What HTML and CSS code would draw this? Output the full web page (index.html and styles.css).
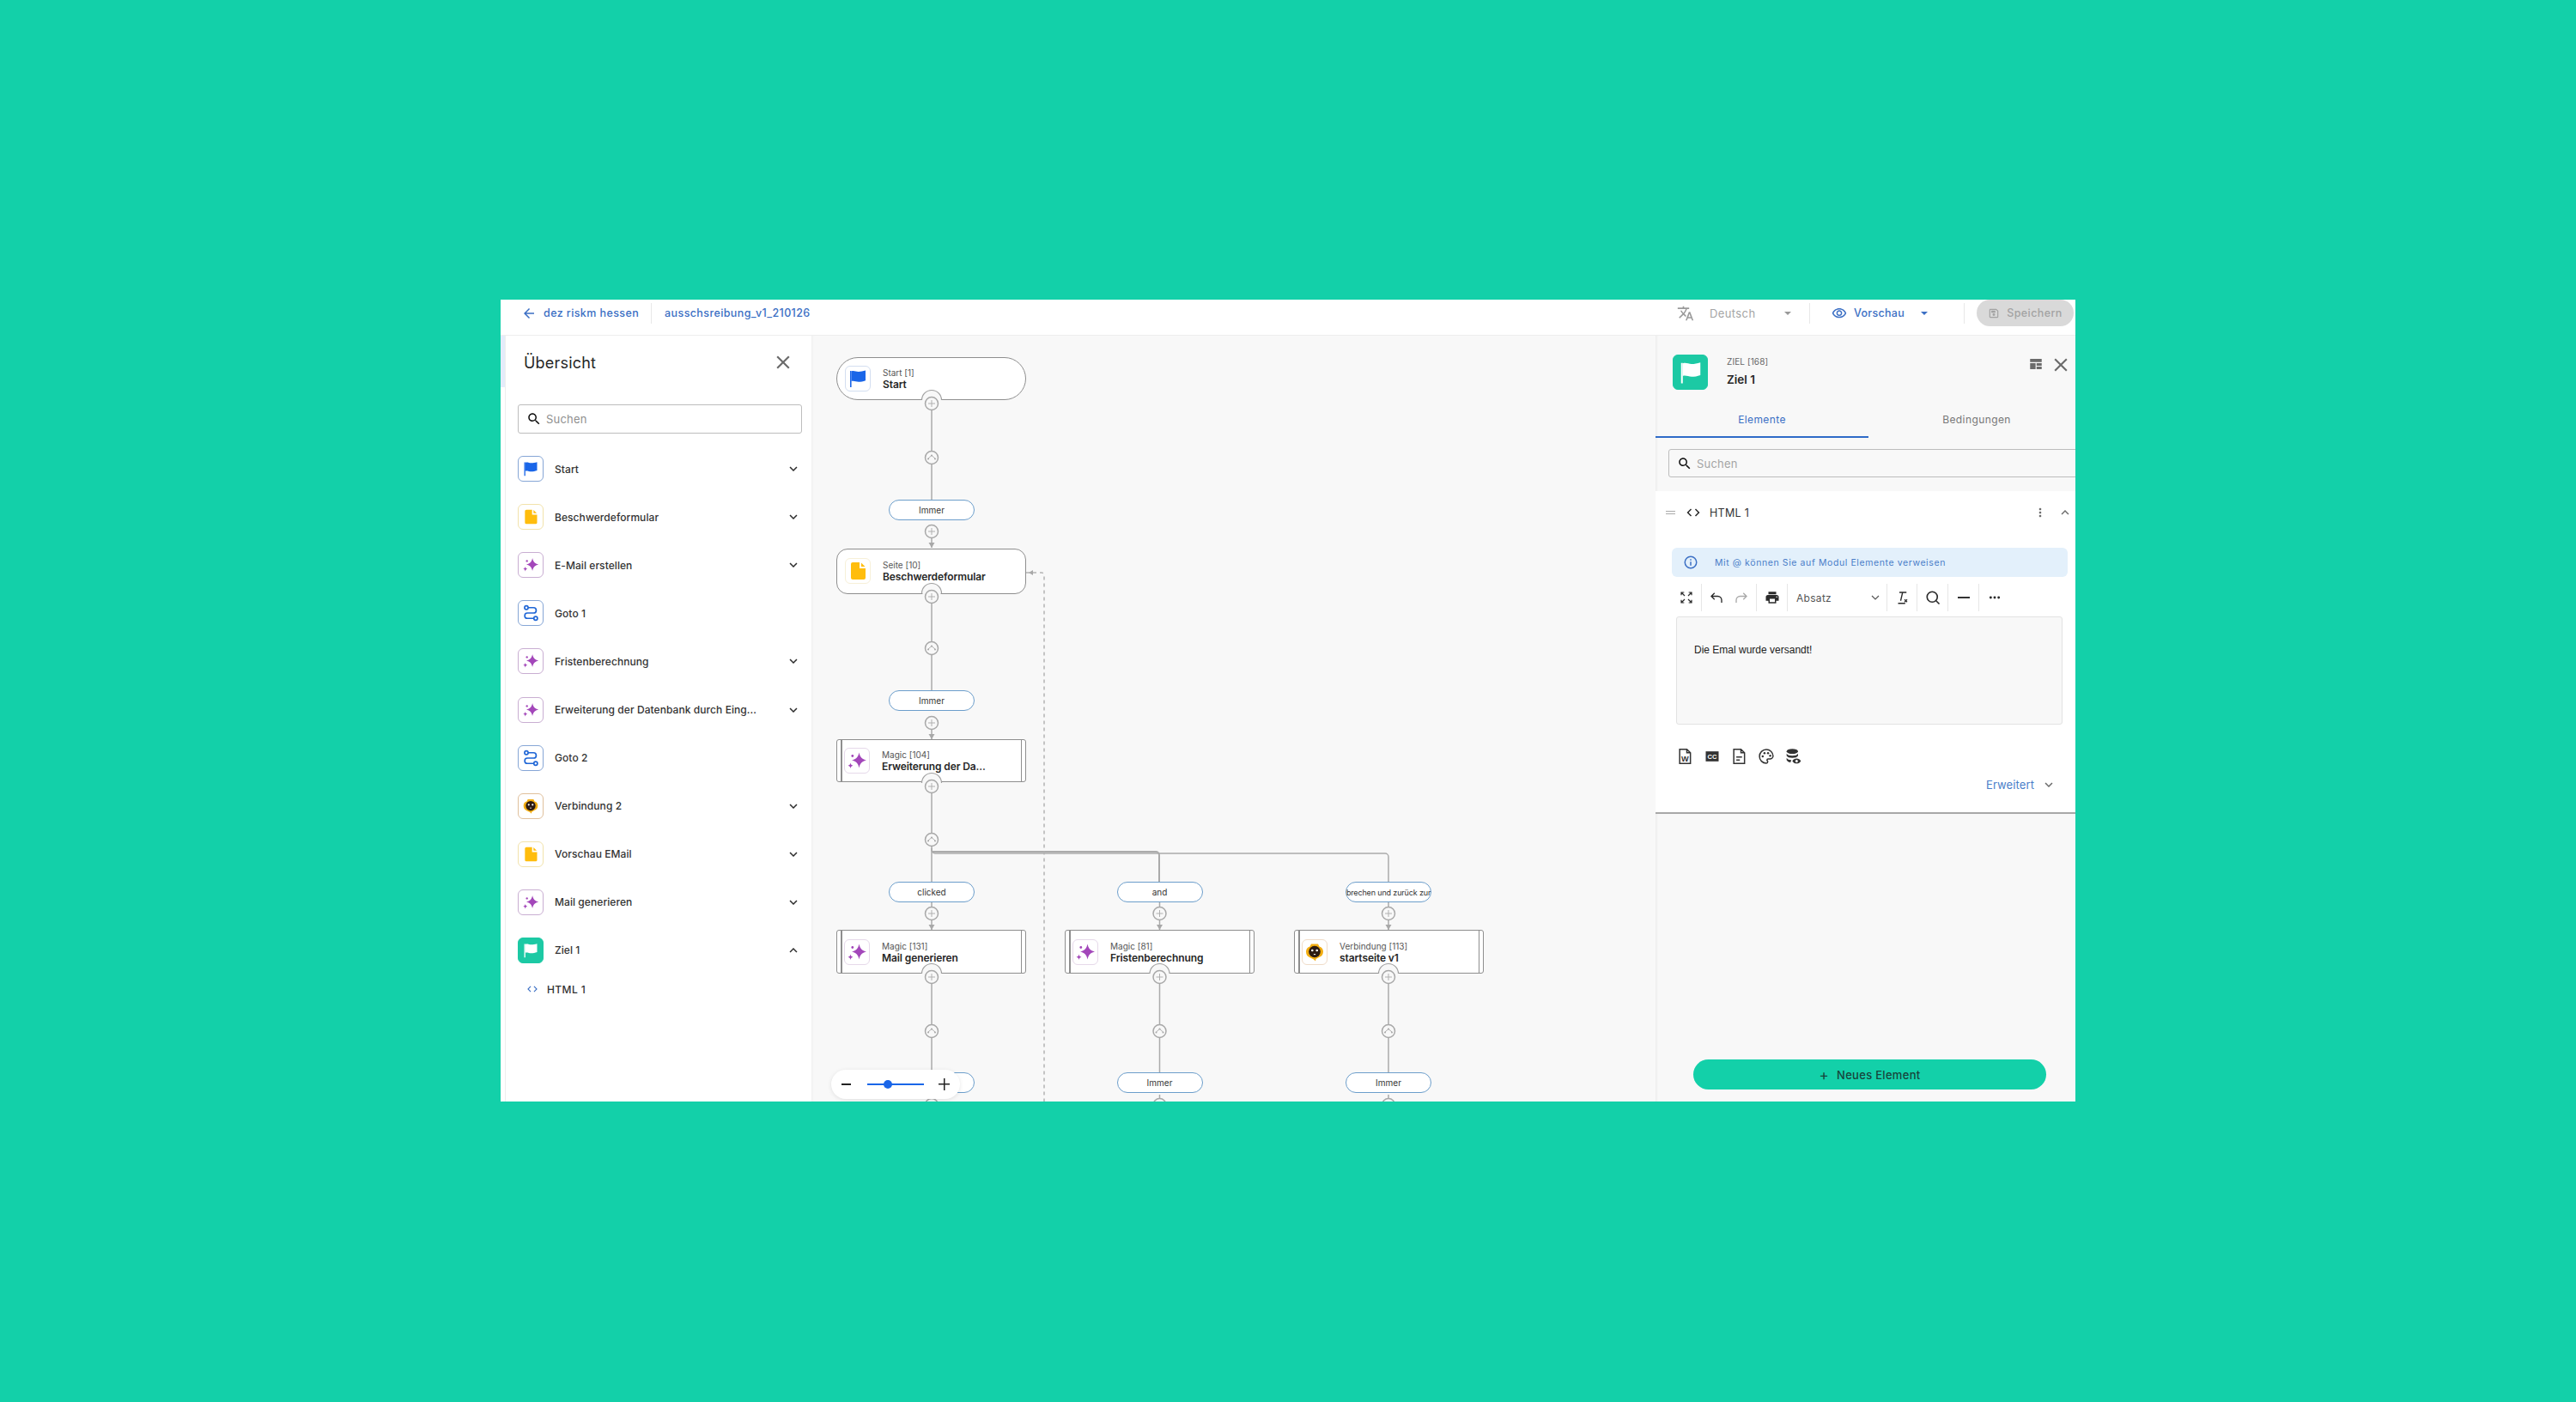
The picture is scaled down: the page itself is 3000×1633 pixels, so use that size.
FILE: index.html
```html
<!DOCTYPE html>
<html lang="de">
<head>
  <meta charset="utf-8">
  <title>ausschsreibung_v1_210126</title>
  <link rel="stylesheet" href="styles.css">
</head>
<body>
<svg class="defs" width="0" height="0">
  <symbol id="i-flag" viewBox="0 0 24 24"><path d="M3 3h1.6v19H3z"/><path d="M4.6 3.4c3-1 5.2.6 8.2.6 2.9 0 5-.5 8.2-1.4v11.7c-3 1-5.3 1.5-8.2 1.5-3 0-5.2-1.5-8.2-.7z"/></symbol>
  <symbol id="i-file" viewBox="0 0 24 24"><path d="M6 2h8v7h7v11a2 2 0 0 1-2 2H6a2 2 0 0 1-2-2V4a2 2 0 0 1 2-2z"/><path d="M16 2.5l4.5 4.5H16z"/></symbol>
  <symbol id="i-magic" viewBox="0 0 24 24"><path d="M14.5 2.5c1 5.2 3.3 7.8 8.5 9-5.2 1.2-7.5 3.8-8.5 9-1-5.2-3.3-7.8-8.5-9 5.2-1.2 7.5-3.8 8.5-9z"/><path d="M4.5 14.5c.4 2 1.1 2.8 3 3.2-1.9.4-2.6 1.2-3 3.3-.4-2.1-1.1-2.9-3-3.3 1.9-.4 2.6-1.2 3-3.2z"/><circle cx="6.8" cy="6.5" r="1.4"/></symbol>
  <symbol id="i-goto" viewBox="0 0 24 24"><g fill="none" stroke="currentColor" stroke-width="2"><circle cx="6" cy="4.5" r="2.5"/><circle cx="19" cy="19.5" r="2.5"/><path d="M8.5 4.5H16a3.7 3.7 0 0 1 0 7.5H7.5a3.7 3.7 0 0 0 0 7.5h9"/></g></symbol>
  <symbol id="i-bot" viewBox="0 0 24 24"><path fill="#f2ad12" d="M8 2.5h8l1.5 3c2.5.5 4.5 2.5 4.5 6s-2 5.5-4.5 6.2L13.5 20l-.5 2.5-2-2-4.5-2.3C4 17.5 2 15 2 11.5s2-5.5 4.5-6z"/><circle cx="12" cy="11.5" r="6.8" fill="#2b1a12"/><circle cx="9.3" cy="10" r="1.3" fill="#fff"/><circle cx="14.7" cy="10" r="1.3" fill="#fff"/><path fill="#fff" d="M10.5 14h3l-1.5 1.5z"/></symbol>
  <symbol id="i-search" viewBox="0 0 24 24"><path d="M15.5 14h-.79l-.28-.27C15.41 12.59 16 11.11 16 9.5 16 5.91 13.09 3 9.5 3S3 5.91 3 9.5 5.91 16 9.5 16c1.61 0 3.09-.59 4.23-1.57l.27.28v.79l5 4.99L20.49 19l-4.99-5zm-6 0C7.01 14 5 11.99 5 9.5S7.01 5 9.5 5 14 7.01 14 9.5 11.99 14 9.5 14z"/></symbol>
  <symbol id="i-close" viewBox="0 0 24 24"><path d="M19 6.41L17.59 5 12 10.59 6.41 5 5 6.41 10.59 12 5 17.59 6.41 19 12 13.41 17.59 19 19 17.59 13.41 12z"/></symbol>
  <symbol id="i-down" viewBox="0 0 24 24"><path d="M16.59 8.59L12 13.17 7.41 8.59 6 10l6 6 6-6z"/></symbol>
  <symbol id="i-up" viewBox="0 0 24 24"><path d="M12 8l-6 6 1.41 1.41L12 10.83l4.59 4.58L18 14z"/></symbol>
  <symbol id="i-code" viewBox="0 0 24 24"><path d="M9.4 16.6L4.8 12l4.6-4.6L8 6l-6 6 6 6 1.4-1.4zm5.2 0l4.6-4.6-4.6-4.6L16 6l6 6-6 6-1.4-1.4z"/></symbol>
</svg>

<div class="app">
  <header class="topbar">
    <svg class="ic18 blue" viewBox="0 0 24 24"><path d="M20 11H7.83l5.59-5.59L12 4l-8 8 8 8 1.41-1.41L7.83 13H20v-2z"/></svg>
    <a class="crumb">dez riskm hessen</a>
    <span class="vsep"></span>
    <a class="crumb">ausschsreibung_v1_210126</a>
    <div class="topbar-right">
      <svg class="ic20 grey" viewBox="0 0 24 24"><path d="M12.87 15.07l-2.54-2.51.03-.03c1.74-1.94 2.98-4.17 3.71-6.53H17V4h-7V2H8v2H1v1.99h11.17C11.5 7.92 10.44 9.75 9 11.35 8.07 10.32 7.3 9.19 6.69 8h-2c.73 1.63 1.73 3.17 2.98 4.56l-5.09 5.02L4 19l5-5 3.11 3.11.76-2.04zM18.5 10h-2L12 22h2l1.12-3h4.75L21 22h2l-4.5-12zm-2.62 7l1.62-4.33L19.12 17h-3.24z"/></svg>
      <span class="lang">Deutsch</span>
      <span class="caret caret-grey"></span>
      <span class="vsep vsep-lang"></span>
      <svg class="ic18 blue" viewBox="0 0 24 24"><path d="M12 6c3.79 0 7.17 2.13 8.82 5.5C19.17 14.87 15.79 17 12 17s-7.17-2.13-8.82-5.5C4.83 8.13 8.21 6 12 6m0-2C7 4 2.73 7.11 1 11.5 2.73 15.89 7 19 12 19s9.27-3.11 11-7.5C21.27 7.11 17 4 12 4zm0 5c1.38 0 2.5 1.12 2.5 2.5S13.38 14 12 14s-2.5-1.12-2.5-2.5S10.62 9 12 9m0-2c-2.48 0-4.5 2.02-4.5 4.5S9.52 16 12 16s4.5-2.02 4.5-4.5S14.48 7 12 7z"/></svg>
      <span class="preview">Vorschau</span>
      <span class="caret caret-blue"></span>
      <span class="vsep vsep-preview"></span>
      <button class="save">
        <svg class="ic14" viewBox="0 0 24 24"><path d="M17 3H5c-1.11 0-2 .9-2 2v14c0 1.1.89 2 2 2h14c1.1 0 2-.9 2-2V7l-4-4zm2 16H5V5h11.2L19 7.8V19zm-7-7a2.5 2.5 0 1 0 0 5 2.5 2.5 0 0 0 0-5zM7 6.5h8v4H7z"/></svg>
        Speichern
      </button>
    </div>
  </header>

  <div class="main">
    <div class="rail"><span class="rail-mark"></span></div>

    <aside class="sidebar">
      <div class="side-head">
        <h1>Übersicht</h1>
        <svg class="ic26 darkgrey"><use href="#i-close"/></svg>
      </div>
      <label class="search search-side">
        <svg class="ic18"><use href="#i-search"/></svg>
        <span>Suchen</span>
      </label>
      <ul class="tree">
        <li class="tree-row"><span class="tile t-blue"><svg><use href="#i-flag"/></svg></span><span class="tree-name">Start</span><svg class="ic18 chev"><use href="#i-down"/></svg></li>
        <li class="tree-row"><span class="tile t-yellow"><svg><use href="#i-file"/></svg></span><span class="tree-name">Beschwerdeformular</span><svg class="ic18 chev"><use href="#i-down"/></svg></li>
        <li class="tree-row"><span class="tile t-purple"><svg><use href="#i-magic"/></svg></span><span class="tree-name">E-Mail erstellen</span><svg class="ic18 chev"><use href="#i-down"/></svg></li>
        <li class="tree-row"><span class="tile t-goto"><svg><use href="#i-goto"/></svg></span><span class="tree-name">Goto 1</span></li>
        <li class="tree-row"><span class="tile t-purple"><svg><use href="#i-magic"/></svg></span><span class="tree-name">Fristenberechnung</span><svg class="ic18 chev"><use href="#i-down"/></svg></li>
        <li class="tree-row"><span class="tile t-purple"><svg><use href="#i-magic"/></svg></span><span class="tree-name">Erweiterung der Datenbank durch Eing...</span><svg class="ic18 chev"><use href="#i-down"/></svg></li>
        <li class="tree-row"><span class="tile t-goto"><svg><use href="#i-goto"/></svg></span><span class="tree-name">Goto 2</span></li>
        <li class="tree-row"><span class="tile t-bot"><svg><use href="#i-bot"/></svg></span><span class="tree-name">Verbindung 2</span><svg class="ic18 chev"><use href="#i-down"/></svg></li>
        <li class="tree-row"><span class="tile t-yellow"><svg><use href="#i-file"/></svg></span><span class="tree-name">Vorschau EMail</span><svg class="ic18 chev"><use href="#i-down"/></svg></li>
        <li class="tree-row"><span class="tile t-purple"><svg><use href="#i-magic"/></svg></span><span class="tree-name">Mail generieren</span><svg class="ic18 chev"><use href="#i-down"/></svg></li>
        <li class="tree-row"><span class="tile t-green"><svg><use href="#i-flag"/></svg></span><span class="tree-name">Ziel 1</span><svg class="ic18 chev"><use href="#i-up"/></svg></li>
        <li class="tree-child"><svg class="ic14 blue"><use href="#i-code"/></svg><span>HTML 1</span></li>
      </ul>
    </aside>

    <section class="canvas">
      <div class="node round col1 y-start"><span class="tile t-soft t-blue"><svg><use href="#i-flag"/></svg></span><div><small>Start [1]</small><b>Start</b></div></div>
      <div class="node page col1 y-page"><span class="tile t-soft t-yellow"><svg><use href="#i-file"/></svg></span><div><small>Seite [10]</small><b>Beschwerdeformular</b></div></div>
      <div class="node sub col1 y-magic"><span class="tile t-soft t-purple"><svg><use href="#i-magic"/></svg></span><div><small>Magic [104]</small><b>Erweiterung der Da...</b></div></div>
      <div class="node sub col1 y-row"><span class="tile t-soft t-purple"><svg><use href="#i-magic"/></svg></span><div><small>Magic [131]</small><b>Mail generieren</b></div></div>
      <div class="node sub col2 y-row"><span class="tile t-soft t-purple"><svg><use href="#i-magic"/></svg></span><div><small>Magic [81]</small><b>Fristenberechnung</b></div></div>
      <div class="node sub col3 y-row"><span class="tile t-soft t-bot"><svg><use href="#i-bot"/></svg></span><div><small>Verbindung [113]</small><b>startseite v1</b></div></div>

      <div class="pill pcol1 y-p1">Immer</div>
      <div class="pill pcol1 y-p2">Immer</div>
      <div class="pill pcol1 y-p3">clicked</div>
      <div class="pill pcol2 y-p3">and</div>
      <div class="pill pill-long pcol3 y-p3">brechen und zurück zur</div>
      <div class="pill pcol1 y-p4">Immer</div>
      <div class="pill pcol2 y-p4">Immer</div>
      <div class="pill pcol3 y-p4">Immer</div>

      <svg class="wires" width="983" height="892">
        <defs>
          <g id="w-plus"><circle r="7.5" class="w-circle"/><path d="M-4 0h8M0-4v8" class="w-thin"/></g>
          <g id="w-branch"><circle r="7.5" class="w-circle"/><path d="M0-2.5L-4 1M0-2.5L4 1" class="w-thin"/><circle cx="-4" cy="1.5" r="1" class="w-dot"/><circle cx="4" cy="1.5" r="1" class="w-dot"/><circle cy="-2.5" r="1" class="w-dot"/></g>
          <g id="w-notch"><path d="M-11.5-4A11 11 0 0 1 11.5-4L8-2H-8z" class="w-notch"/><path d="M-11.5-4A11.5 11.5 0 0 1 11.5-4" class="w-arc"/></g>
          <path id="w-arrow" d="M-3.5-6h7L0 0z" class="w-dot"/>
        </defs>
        <!-- column 1 -->
        <path class="w-line" d="M140 87V191M140 236V247M140 312V413M140 459V470M140 533V636M140 660V692M140 755V858M140 884V892"/>
        <!-- column 2 and 3 -->
        <path class="w-line w-fat" d="M140 601H401a4 4 0 0 1 4 4V636"/>
        <path class="w-line" d="M140 597v2a4 4 0 0 0 4 4H668a4 4 0 0 1 4 4V636"/>
        <path class="w-line" d="M405.5 660V692M405.5 755V858M405.5 884V892M672 660V692M672 755V858M672 884V892"/>
        <!-- dashed jump -->
        <path class="w-dash" d="M250 276H268a3 3 0 0 1 3 3V892"/>
        <path class="w-dot" d="M258 273v6l-5-3z"/>

        <use href="#w-notch" x="140" y="79"/><use href="#w-plus" x="140" y="79"/>
        <use href="#w-branch" x="140" y="142"/>
        <use href="#w-plus" x="140" y="228"/><use href="#w-arrow" x="140" y="247"/>
        <use href="#w-notch" x="140" y="304"/><use href="#w-plus" x="140" y="304"/>
        <use href="#w-branch" x="140" y="364"/>
        <use href="#w-plus" x="140" y="451"/><use href="#w-arrow" x="140" y="470"/>
        <use href="#w-notch" x="140" y="525"/><use href="#w-plus" x="140" y="525"/>
        <use href="#w-branch" x="140" y="587"/>
        <use href="#w-plus" x="140" y="673"/><use href="#w-arrow" x="140" y="692"/>
        <use href="#w-notch" x="140" y="747"/><use href="#w-plus" x="140" y="747"/>
        <use href="#w-branch" x="140" y="810"/>
        <use href="#w-plus" x="140" y="896"/>

        <use href="#w-plus" x="405.5" y="673"/><use href="#w-arrow" x="405.5" y="692"/>
        <use href="#w-notch" x="405.5" y="747"/><use href="#w-plus" x="405.5" y="747"/>
        <use href="#w-branch" x="405.5" y="810"/>
        <use href="#w-plus" x="405.5" y="896"/>

        <use href="#w-plus" x="672" y="673"/><use href="#w-arrow" x="672" y="692"/>
        <use href="#w-notch" x="672" y="747"/><use href="#w-plus" x="672" y="747"/>
        <use href="#w-branch" x="672" y="810"/>
        <use href="#w-plus" x="672" y="896"/>
      </svg>

      <div class="zoom">
        <span class="zoom-minus"></span>
        <span class="zoom-track"><span class="zoom-thumb"></span></span>
        <span class="zoom-plus"></span>
      </div>
    </section>

    <aside class="panel">
      <div class="panel-head">
        <span class="tile tile-big t-green"><svg><use href="#i-flag"/></svg></span>
        <div class="panel-title"><small>ZIEL [168]</small><b>Ziel 1</b></div>
        <svg class="ic18 darkgrey layout-ic" viewBox="0 0 24 24"><path d="M3 4h18v5H3zM3 10.5h8.5V20H3zM13 10.5h8V14.5h-8zM13 16h8v4h-8z"/></svg>
        <svg class="ic26 darkgrey panel-close"><use href="#i-close"/></svg>
      </div>
      <div class="tabs">
        <span class="tab tab-on">Elemente</span>
        <span class="tab">Bedingungen</span>
      </div>
      <label class="search search-panel">
        <svg class="ic18"><use href="#i-search"/></svg>
        <span>Suchen</span>
      </label>

      <div class="card">
        <div class="card-row">
          <span class="drag"></span>
          <svg class="ic18 code-ic"><use href="#i-code"/></svg>
          <span class="card-name">HTML 1</span>
          <svg class="ic16 darkgrey kebab" viewBox="0 0 24 24"><path d="M12 8c1.1 0 2-.9 2-2s-.9-2-2-2-2 .9-2 2 .9 2 2 2zm0 2c-1.1 0-2 .9-2 2s.9 2 2 2 2-.9 2-2-.9-2-2-2zm0 6c-1.1 0-2 .9-2 2s.9 2 2 2 2-.9 2-2-.9-2-2-2z"/></svg>
          <svg class="ic18 darkgrey"><use href="#i-up"/></svg>
        </div>
        <div class="info">
          <svg class="ic18 blue" viewBox="0 0 24 24"><path d="M11 7h2v2h-2zm0 4h2v6h-2zm1-9a10 10 0 1 0 0 20 10 10 0 0 0 0-20zm0 18a8 8 0 1 1 0-16 8 8 0 0 1 0 16z"/></svg>
          <span>Mit @ können Sie auf Modul Elemente verweisen</span>
        </div>
        <div class="toolbar">
          <span class="tool tool-36"><svg class="ic16 outline thin" viewBox="0 0 24 24"><path d="M3 8V3h5M3 3l6 6M21 8V3h-5M21 3l-6 6M3 16v5h5M3 21l6-6M21 16v5h-5M21 21l-6-6"/></svg></span>
          <span class="tool tool-64">
            <svg class="ic18 outline thin" viewBox="0 0 24 24"><path d="M9 15L4 10l5-5M4 10h10a6 6 0 0 1 6 6v4"/></svg>
            <svg class="ic18 outline thin faded" viewBox="0 0 24 24"><path d="M15 15l5-5-5-5M20 10H10a6 6 0 0 0-6 6v4"/></svg>
          </span>
          <span class="tool tool-36"><svg class="ic18" viewBox="0 0 24 24"><path d="M19 8H5c-1.66 0-3 1.34-3 3v6h4v4h12v-4h4v-6c0-1.66-1.34-3-3-3zm-3 11H8v-5h8v5zm3-7c-.55 0-1-.45-1-1s.45-1 1-1 1 .45 1 1-.45 1-1 1zm-1-9H6v4h12V3z"/></svg></span>
          <span class="tool tool-select"><span>Absatz</span><svg class="ic16 outline thin" viewBox="0 0 24 24"><path d="M6 9l6 6 6-6"/></svg></span>
          <span class="tool tool-35"><svg class="ic18 outline thin" viewBox="0 0 24 24"><path d="M8 4h11M13 4L10 17M6 21h11"/><path class="x-small" d="M16 15l4 4M20 15l-4 4"/></svg></span>
          <span class="tool tool-36"><svg class="ic18 outline" viewBox="0 0 24 24"><circle cx="11" cy="11" r="8"/><path d="M17 17l5 5"/></svg></span>
          <span class="tool tool-36"><span class="hr-ic"></span></span>
          <span class="tool tool-36 tool-last"><svg class="ic16" viewBox="0 0 24 24"><circle cx="5" cy="12" r="2.2"/><circle cx="12" cy="12" r="2.2"/><circle cx="19" cy="12" r="2.2"/></svg></span>
        </div>
        <div class="editor"><p>Die Emal wurde versandt!</p></div>
        <div class="attach">
          <svg class="ic20 outline thin" viewBox="0 0 24 24"><path d="M5 2h10l5 5v15H5zM15 2v5h5"/><text x="12.5" y="19" class="svg-w">W</text></svg>
          <svg class="ic20" viewBox="0 0 24 24"><path d="M3 5h18v14H3z"/><text x="12" y="15.5" class="svg-cc">CC</text></svg>
          <svg class="ic20 outline thin" viewBox="0 0 24 24"><path d="M5 2h10l5 5v15H5zM15 2v5h5M8.5 13h8M8.5 17h5"/></svg>
          <svg class="ic20 outline thin" viewBox="0 0 24 24"><path d="M12 2.5C6.7 2.5 2.5 6.7 2.5 12s4.2 9.5 9.5 9.5c1.3 0 2-1 2-2 0-1.3-1-1.5-1-2.5 0-.8.7-1.5 1.5-1.5H17c2.5 0 4.5-2 4.5-4 0-5-4.3-9-9.5-9z"/><circle cx="7" cy="12" r="1.5" class="w-solid"/><circle cx="9.5" cy="7.5" r="1.5" class="w-solid"/><circle cx="14.5" cy="7.5" r="1.5" class="w-solid"/><circle cx="17.5" cy="11" r="1.5" class="w-solid"/></svg>
          <svg class="ic20" viewBox="0 0 24 24"><ellipse cx="10" cy="5" rx="8" ry="3.5"/><path d="M2 8c1 2 4 3 8 3s7-1 8-3v3c-1 2-4 3-8 3s-7-1-8-3zM2 14c1 2 3.5 3 6.5 3l-1 3.5C5 20 3 19 2 17z"/><path d="M10 18.5c1.5-2.5 3.5-3.5 6-3.5s4.5 1 6 3.5c-1.500 2.500-3.500 3.500-6 3.500s-4.500-1-6-3.500zm6-1.800a1.800 1.800 0 1 0 0 3.600 1.800 1.800 0 0 0 0-3.600z"/></svg>
        </div>
        <div class="more-row">
          <span>Erweitert</span>
          <svg class="ic18 darkgrey"><use href="#i-down"/></svg>
        </div>
      </div>

      <button class="add"><span class="add-plus">+</span>Neues Element</button>
    </aside>
  </div>
</div>
</body>
</html>
```

FILE: styles.css
```css
*{margin:0;padding:0;box-sizing:border-box}
body{
    background:#13d0a9;
    padding:349px 583px 350px;
    font-family:Inter,"Noto Sans",sans-serif;
    color:#2b2b2b;
}
.defs{position:absolute}
svg{fill:currentColor;flex-shrink:0;display:block}
.ic14{width:14px;height:14px}
.ic16{width:16px;height:16px}
.ic18{width:18px;height:18px}
.ic20{width:20px;height:20px}
.ic26{width:26px;height:26px}
.blue{color:#3b6fc4}
.grey{color:#9a9a9a}
.darkgrey{color:#6b6b6b}
.outline{fill:none;stroke:currentColor;stroke-width:2.2}
.outline.thin{stroke-width:1.8}
.faded{color:#aaa}
.x-small{stroke-width:1.6}

.app{
    width:1834px;
    height:934px;
    background:#fff;
    display:flex;
    flex-direction:column;
    overflow:hidden;
}

/* top bar */
.topbar{
    height:42px;
    flex-shrink:0;
    display:flex;
    align-items:center;
    padding:0 2px 10px 24px;
    border-bottom:1px solid #eee;
}
.crumb{
    font-size:12.5px;
    font-weight:500;
    letter-spacing:.4px;
    color:#3b6fc4;
}
.topbar > .crumb:nth-of-type(1){margin-left:8px}
.vsep{width:1px;height:24px;background:#e8e8e8;margin:0 15px 0 14px}
.topbar-right{margin-left:auto;display:flex;align-items:center}
.lang{font-size:13px;color:#a5a5a5;letter-spacing:.4px;margin-left:18px;width:62px}
.caret{width:0;height:0;border-left:4px solid transparent;border-right:4px solid transparent;border-top:4px solid #999}
.caret-grey{margin-left:25px}
.caret-blue{border-top-color:#3b6fc4;margin-left:19px}
.vsep-lang{margin:0 25px 0 21px}
.vsep-preview{margin:0 14px 0 42px}
.preview{font-size:12.5px;font-weight:500;color:#3b6fc4;letter-spacing:.3px;margin-left:8px}
.save{
    width:113px;
    height:31px;
    border:0;
    border-radius:16px;
    background:#d9d9d9;
    color:#a3a3a3;
    font:500 12.5px Inter,sans-serif;
    letter-spacing:.4px;
    display:flex;
    align-items:center;
    justify-content:center;
    gap:8px;
}

.main{flex:1;display:flex;min-height:0}
.rail{width:6px;border-right:1px solid #eee;flex-shrink:0}
.rail-mark{display:block;height:60px;background:#e4ecfa}

/* left overview */
.sidebar{width:356px;flex-shrink:0;padding:20px 11px 0 14px;background:#fff}
.side-head{display:flex;align-items:center;justify-content:space-between;height:22px;padding:0 9px 0 7px;margin-bottom:38px}
h1{font-size:18px;font-weight:400;letter-spacing:.2px;color:#262626}
.search{display:flex;align-items:center;border:1px solid #bdbdbd;border-radius:3px;font-size:13px;letter-spacing:.2px;color:#8f8f8f}
.search svg{color:#111}
.search-side{height:34px;padding-left:9px;gap:5px;margin-bottom:13px}
.tree{list-style:none}
.tree-row{height:56.1px;display:flex;align-items:center}
.tree-name{font-size:12px;font-weight:500;letter-spacing:.07px;margin-left:13px;flex:1;white-space:nowrap;color:#333}
.chev{margin-right:1px}
.tree-child{height:34px;display:flex;align-items:center;gap:10px;padding-left:10px;font-size:12px;font-weight:500;letter-spacing:.4px;color:#333}

.tile{
    width:30px;
    height:30px;
    border:1.5px solid;
    border-radius:6px;
    display:flex;
    align-items:center;
    justify-content:center;
    flex-shrink:0;
    background:#fff;
}
.tile svg{width:20px;height:20px}
.t-blue{border-color:#86a6d6;color:#1a66e8}
.t-yellow{border-color:#f2e3ab;color:#ffbd0d}
.t-purple{border-color:#c9aed2;color:#a347ba}
.t-goto{border-color:#86a6d6;color:#1f66d6}
.t-bot{border-color:#e0c09c}
.t-green{border-color:#1cc9a4;background:#1cc9a4;color:#fff}
.t-soft{border-width:1px}
.t-soft.t-blue{border-color:#d3def0}
.t-soft.t-yellow{border-color:#f7f0d8}
.t-soft.t-purple{border-color:#e6d9ea}
.t-soft.t-bot{border-color:#f0dcc8}
.t-soft svg{width:24px;height:24px}

/* flow canvas */
.canvas{width:983px;flex-shrink:0;position:relative;background:#f8f8f8;overflow:hidden;box-shadow:inset 3px 0 3px -2px #eee}
.node{
    position:absolute;
    width:221px;
    height:50px;
    background:#fff;
    border:1.5px solid #8e8e8e;
    display:flex;
    align-items:center;
    padding-left:9px;
}
.node small{display:block;font-size:10px;color:#555;line-height:13px}
.node b{display:block;font-size:12px;font-weight:600;letter-spacing:-.1px;line-height:13px;color:#262626;white-space:nowrap}
.node .tile + div{margin-left:14px}
.round{border-radius:25px}
.page{border-radius:13px;height:53px;padding-bottom:2px}
.sub{border-radius:3px;padding-left:8px}
.sub::before,.sub::after{content:"";position:absolute;top:0;bottom:0;width:1.5px;background:#8e8e8e}
.sub::before{left:4px}
.sub::after{right:4px}
.col1{left:29px}
.col2{left:295px}
.col3{left:562px}
.y-start{top:25px}
.y-page{top:248px}
.y-magic{top:470px}
.y-row{top:692px;height:51px}

.pill{
    position:absolute;
    width:100px;
    height:24px;
    background:#fff;
    border:1.5px solid #6c9ecb;
    border-radius:12px;
    font-size:10px;
    color:#333;
    display:flex;
    align-items:center;
    justify-content:center;
    white-space:nowrap;
}
.pill-long{font-size:9px;letter-spacing:-.15px}
.pcol1{left:90px}
.pcol2{left:355.5px}
.pcol3{left:622px}
.y-p1{top:191px}
.y-p2{top:413px}
.y-p3{top:636px}
.y-p4{top:858px}

.wires{position:absolute;left:0;top:0;fill:none}
.w-line{stroke:#ababab;stroke-width:1.5;fill:none}
.w-fat{stroke-width:2}
.w-dash{stroke:#b3b3b3;stroke-width:1.5;stroke-dasharray:4 4;fill:none}
.w-circle{fill:#f8f8f8;stroke:#a8a8a8;stroke-width:1.5}
.w-thin{stroke:#b0b0b0;stroke-width:1;fill:none}
.w-dot{fill:#a8a8a8}
.w-notch{fill:#f8f8f8}
.w-arc{fill:none;stroke:#a0a0a0;stroke-width:1.2}
.w-solid{fill:currentColor;stroke:none}

.zoom{
    position:absolute;
    left:23px;
    top:855px;
    width:150px;
    height:34px;
    border-radius:17px;
    background:#fff;
    box-shadow:0 1px 5px rgba(0,0,0,.1);
    display:flex;
    align-items:center;
    padding:0 12px;
}
.zoom-minus{width:12px;height:2px;background:#222}
.zoom-track{width:68px;height:1.5px;background:#1a66e8;margin:0 17px 0 19px;position:relative}
.zoom-thumb{position:absolute;left:19px;top:-4.5px;width:10px;height:10px;border-radius:50%;background:#1a66e8}
.zoom-plus{width:14px;height:14px;background:linear-gradient(#222,#222) center/14px 1.5px no-repeat,linear-gradient(#222,#222) center/1.5px 14px no-repeat}

/* right panel */
.panel{flex:1;min-width:0;background:#f8f8f8;display:flex;flex-direction:column;overflow:hidden;box-shadow:inset 3px 0 3px -2px #e8e8e8}
.panel-head{height:79px;padding:22px 4px 0 20px;display:flex;align-items:flex-start;flex-shrink:0}
.tile-big{width:41px;height:41px;border-radius:6px}
.tile-big svg{width:30px;height:30px}
.panel-title{margin-left:22px;flex:1;padding-top:1px}
.panel-title small{display:block;font-size:10px;color:#666;line-height:14px;letter-spacing:.1px}
.panel-title b{display:block;font-size:13.5px;font-weight:600;margin-top:6px;line-height:16px;color:#262626}
.layout-ic{margin:2px 7px 0 0}
.panel-close{margin-top:-1px}
.tabs{display:flex;height:40px;flex-shrink:0}
.tab{flex:0 0 252px;text-align:center;font-size:12px;letter-spacing:.4px;line-height:38px;color:#777}
.tab-on{color:#3b6fc4;border-bottom:2px solid #2f6bc8;flex-basis:248px}
.search-panel{width:520px;height:33px;margin:13px 0 16px 15px;padding-left:9px;gap:5px;flex-shrink:0;color:#a5a5a5}
.card{background:#fff;height:376px;flex-shrink:0;border-bottom:2px solid #a8a8a8}
.card-row{height:50px;display:flex;align-items:center;padding:0 3px 0 12px}
.drag{width:11px;height:4px;border-top:1px solid #aaa;border-bottom:1px solid #aaa}
.code-ic{margin-left:12px}
.card-name{font-size:12.5px;letter-spacing:.3px;margin-left:10px;flex:1;color:#333}
.kebab{margin-right:12px}
.info{height:34px;margin:16px 9px 0 19px;border-radius:6px;background:#e3f0fb;display:flex;align-items:center;padding-left:13px;font-size:10.5px;letter-spacing:.6px;color:#4a7ec9}
.info span{margin-left:19px}
.toolbar{height:32px;margin:8px 0 0 18px;display:flex}
.tool{display:flex;align-items:center;justify-content:center;border-right:1px solid #e6e6e6;flex-shrink:0;color:#2b2b2b}
.tool-36{width:36px}
.tool-35{width:35px}
.tool-64{width:64px;gap:11px}
.tool-last{border-right:0}
.tool-select{width:116px;justify-content:space-between;padding:0 5px 0 10px;font-size:12px;letter-spacing:.3px;color:#555}
.hr-ic{width:14px;height:2px;background:#333}
.editor{height:126px;margin:6px 15px 0 24px;background:#f8f8f8;border:1px solid #e2e2e2;border-radius:3px;padding:31px 20px}
.editor p{font:12px/14px "Liberation Sans",sans-serif;color:#222}
.attach{display:flex;gap:11.7px;margin:27px 0 0 24px;height:20px;align-items:center;color:#333}
.svg-w{font:700 11px "Liberation Sans",sans-serif;fill:#333;stroke:none;text-anchor:middle}
.svg-cc{font:700 9px "Liberation Sans",sans-serif;fill:#fff;text-anchor:middle}
.more-row{display:flex;justify-content:flex-end;align-items:center;gap:8px;margin-top:14px;padding-right:22px;font-size:13px;color:#4a7ec9;letter-spacing:.1px}
.add{
    margin:auto 34px 14px 44px;
    height:35px;
    flex-shrink:0;
    border:0;
    border-radius:18px;
    background:#13d0a9;
    font:500 13px Inter,sans-serif;
    letter-spacing:.3px;
    color:#17443b;
    display:flex;
    align-items:center;
    justify-content:center;
}
.add-plus{font-size:17px;font-weight:400;margin-right:9px}
```
